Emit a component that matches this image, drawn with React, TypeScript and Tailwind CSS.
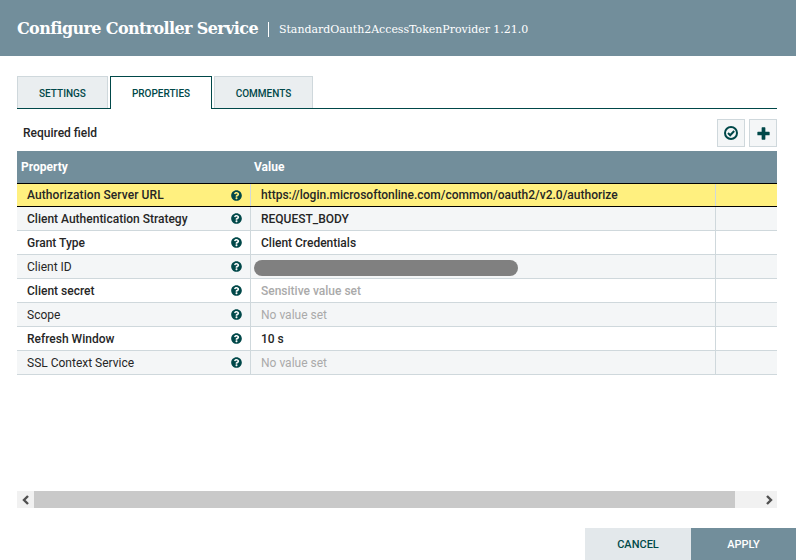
import { FaQuestionCircle } from "react-icons/fa";

type Row = {
  name: string;
  value: string;
  required?: boolean;
  kind?: "set" | "unset" | "sensitive" | "hidden";
};

const rows: Row[] = [
  { name: "Client Authentication Strategy", value: "REQUEST_BODY", required: true, kind: "set" },
  { name: "Grant Type", value: "Client Credentials", required: true, kind: "set" },
  { name: "Client ID", value: "", kind: "hidden" },
  { name: "Client secret", value: "Sensitive value set", required: true, kind: "sensitive" },
  { name: "Scope", value: "No value set", kind: "unset" },
  { name: "Refresh Window", value: "10 s", required: true, kind: "set" },
  { name: "SSL Context Service", value: "No value set", kind: "unset" },
];

function Tab({ label, active }: { label: string; active?: boolean }) {
  if (active) {
    return (
      <div className="w-[102px] h-[33px] -mb-px pt-px flex items-center justify-center bg-white border border-[#004849] border-b-0 text-[10px] font-medium text-[#004849]">
        {label}
      </div>
    );
  }
  return (
    <div className="h-[32px] pt-[2px] flex items-center justify-center bg-[#eaeef0] border border-[#cfd8dc] border-b-0 text-[10px] font-medium text-[#004849]">
      {label}
    </div>
  );
}

function App() {
  return (
    <div className="w-[796px] h-[560px] bg-white flex flex-col overflow-hidden font-['Roboto',sans-serif] text-[#262626]">
      <div className="h-[56px] bg-[#728e9b] flex items-center pl-[17px] text-white shrink-0">
        <span className="pt-[2px] font-['DejaVu_Serif',serif] font-bold text-[16px] tracking-[-0.62px]">Configure Controller Service</span>
        <span className="w-px h-[15px] mt-[3px] bg-white ml-[10px] mr-[10px]" />
        <span className="pt-[5px] font-['DejaVu_Serif',serif] text-[11px] tracking-[-0.03px]">StandardOauth2AccessTokenProvider 1.21.0</span>
      </div>

      <div className="mx-[17px] w-[760px] mt-[20px] h-[33px] flex items-end gap-[2px] border-b border-[#004849]">
        <div className="w-[91px]"><Tab label="SETTINGS" /></div>
        <Tab label="PROPERTIES" active />
        <div className="w-[99px]"><Tab label="COMMENTS" /></div>
      </div>

      <div className="mx-[17px] w-[760px] h-[42px] flex items-start justify-between">
        <div className="pl-[6px] pt-[17px] text-[12px] leading-[14px] font-medium">Required field</div>
        <div className="flex gap-[4px] pt-[10px]">
          <div className="w-[28px] h-[28px] bg-[#f4f6f7] border border-[#cfd8dc] flex items-center justify-center text-[#004849]">
            <svg width="16" height="16" viewBox="0 0 16 16" fill="none" stroke="currentColor">
              <circle cx="8" cy="8" r="6" strokeWidth="2" />
              <path d="M5 8l2.2 2.2L11.2 6" strokeWidth="2" />
            </svg>
          </div>
          <div className="w-[28px] h-[28px] bg-[#f4f6f7] border border-[#cfd8dc] flex items-center justify-center text-[#004849]">
            <svg width="13" height="13" viewBox="0 0 14 14" fill="currentColor">
              <path d="M5 1a.6.6 0 0 1 .6-.6h2.8A.6.6 0 0 1 9 1v4h4a.6.6 0 0 1 .6.6v2.8a.6.6 0 0 1-.6.6H9v4a.6.6 0 0 1-.6.6H5.600a.6.6 0 0 1-.6-.6V9H1a.6.6 0 0 1-.6-.6V5.600A.6.6 0 0 1 1 5h4z" />
            </svg>
          </div>
        </div>
      </div>

      <div className="mx-[17px] w-[760px] flex flex-col">
        <div className="h-[32px] bg-[#728e9b] flex items-center text-white text-[12px] font-bold">
          <div className="w-[233px] pl-[4px]">Property</div>
          <div className="pl-[4px]">Value</div>
        </div>

        <div className="h-[24px] bg-[#fff07f] border-y border-black flex text-[12px] font-medium">
          <div className="w-[234px] pl-[10px] pr-[8px] flex items-center justify-between border-r border-[#cfd8dc]">
            <span className="tracking-[0.08px]">Authorization Server URL</span>
            <FaQuestionCircle size={11} className="text-[#004849]" />
          </div>
          <div className="w-[465px] pl-[10px] flex items-center border-r border-[#cfd8dc]">
            https://login.microsoftonline.com/common/oauth2/v2.0/authorize
          </div>
        </div>

        {rows.map((row, i) => (
          <div
            key={row.name}
            className={`h-[24px] flex text-[12px] border-b border-[#cfd8dc] ${i % 2 === 0 ? "bg-[#f4f6f7]" : "bg-white"}`}
          >
            <div className={`w-[234px] pt-px pl-[10px] pr-[8px] flex items-center justify-between border-r border-[#cfd8dc] ${row.required ? "font-medium" : ""}`}>
              <span>{row.name}</span>
              <FaQuestionCircle size={11} className="text-[#004849] -mt-px" />
            </div>
            <div className="w-[465px] pt-px relative flex items-center pl-[10px] border-r border-[#cfd8dc]">
              {row.kind === "hidden" && (
                <div className="absolute left-[3px] top-[5px] w-[264px] h-[16px] rounded-full bg-[#808080]" />
              )}
              {row.kind === "set" && <span className="font-medium">{row.value}</span>}
              {row.kind === "sensitive" && <span className="font-medium text-[#aaaaaa]">{row.value}</span>}
              {row.kind === "unset" && <span className="text-[#aaaaaa]">{row.value}</span>}
            </div>
          </div>
        ))}
      </div>

      <div className="mx-[17px] w-[760px] mt-[116px] h-[17px] bg-[#f1f1f1] flex items-center">
        <div className="w-[17px] flex justify-center">
          <svg width="8" height="10" viewBox="0 0 8 10"><path d="M6 1 2 5l4 4" fill="none" stroke="#505050" strokeWidth="2.400" /></svg>
        </div>
        <div className="w-[701px] h-full bg-[#c9c9c9]" />
        <div className="flex-1 flex justify-end pr-[4px]">
          <svg width="8" height="10" viewBox="0 0 8 10"><path d="M2 1l4 4-4 4" fill="none" stroke="#505050" strokeWidth="2.400" /></svg>
        </div>
      </div>

      <div className="mt-[20px] h-[32px] flex justify-end text-[11px] font-medium">
        <div className="w-[106px] pt-[2px] bg-[#e3e8eb] text-[#004849] flex items-center justify-center">CANCEL</div>
        <div className="w-[105px] pt-[2px] bg-[#728e9b] text-white flex items-center justify-center">APPLY</div>
      </div>
    </div>
  );
}

export default App;
